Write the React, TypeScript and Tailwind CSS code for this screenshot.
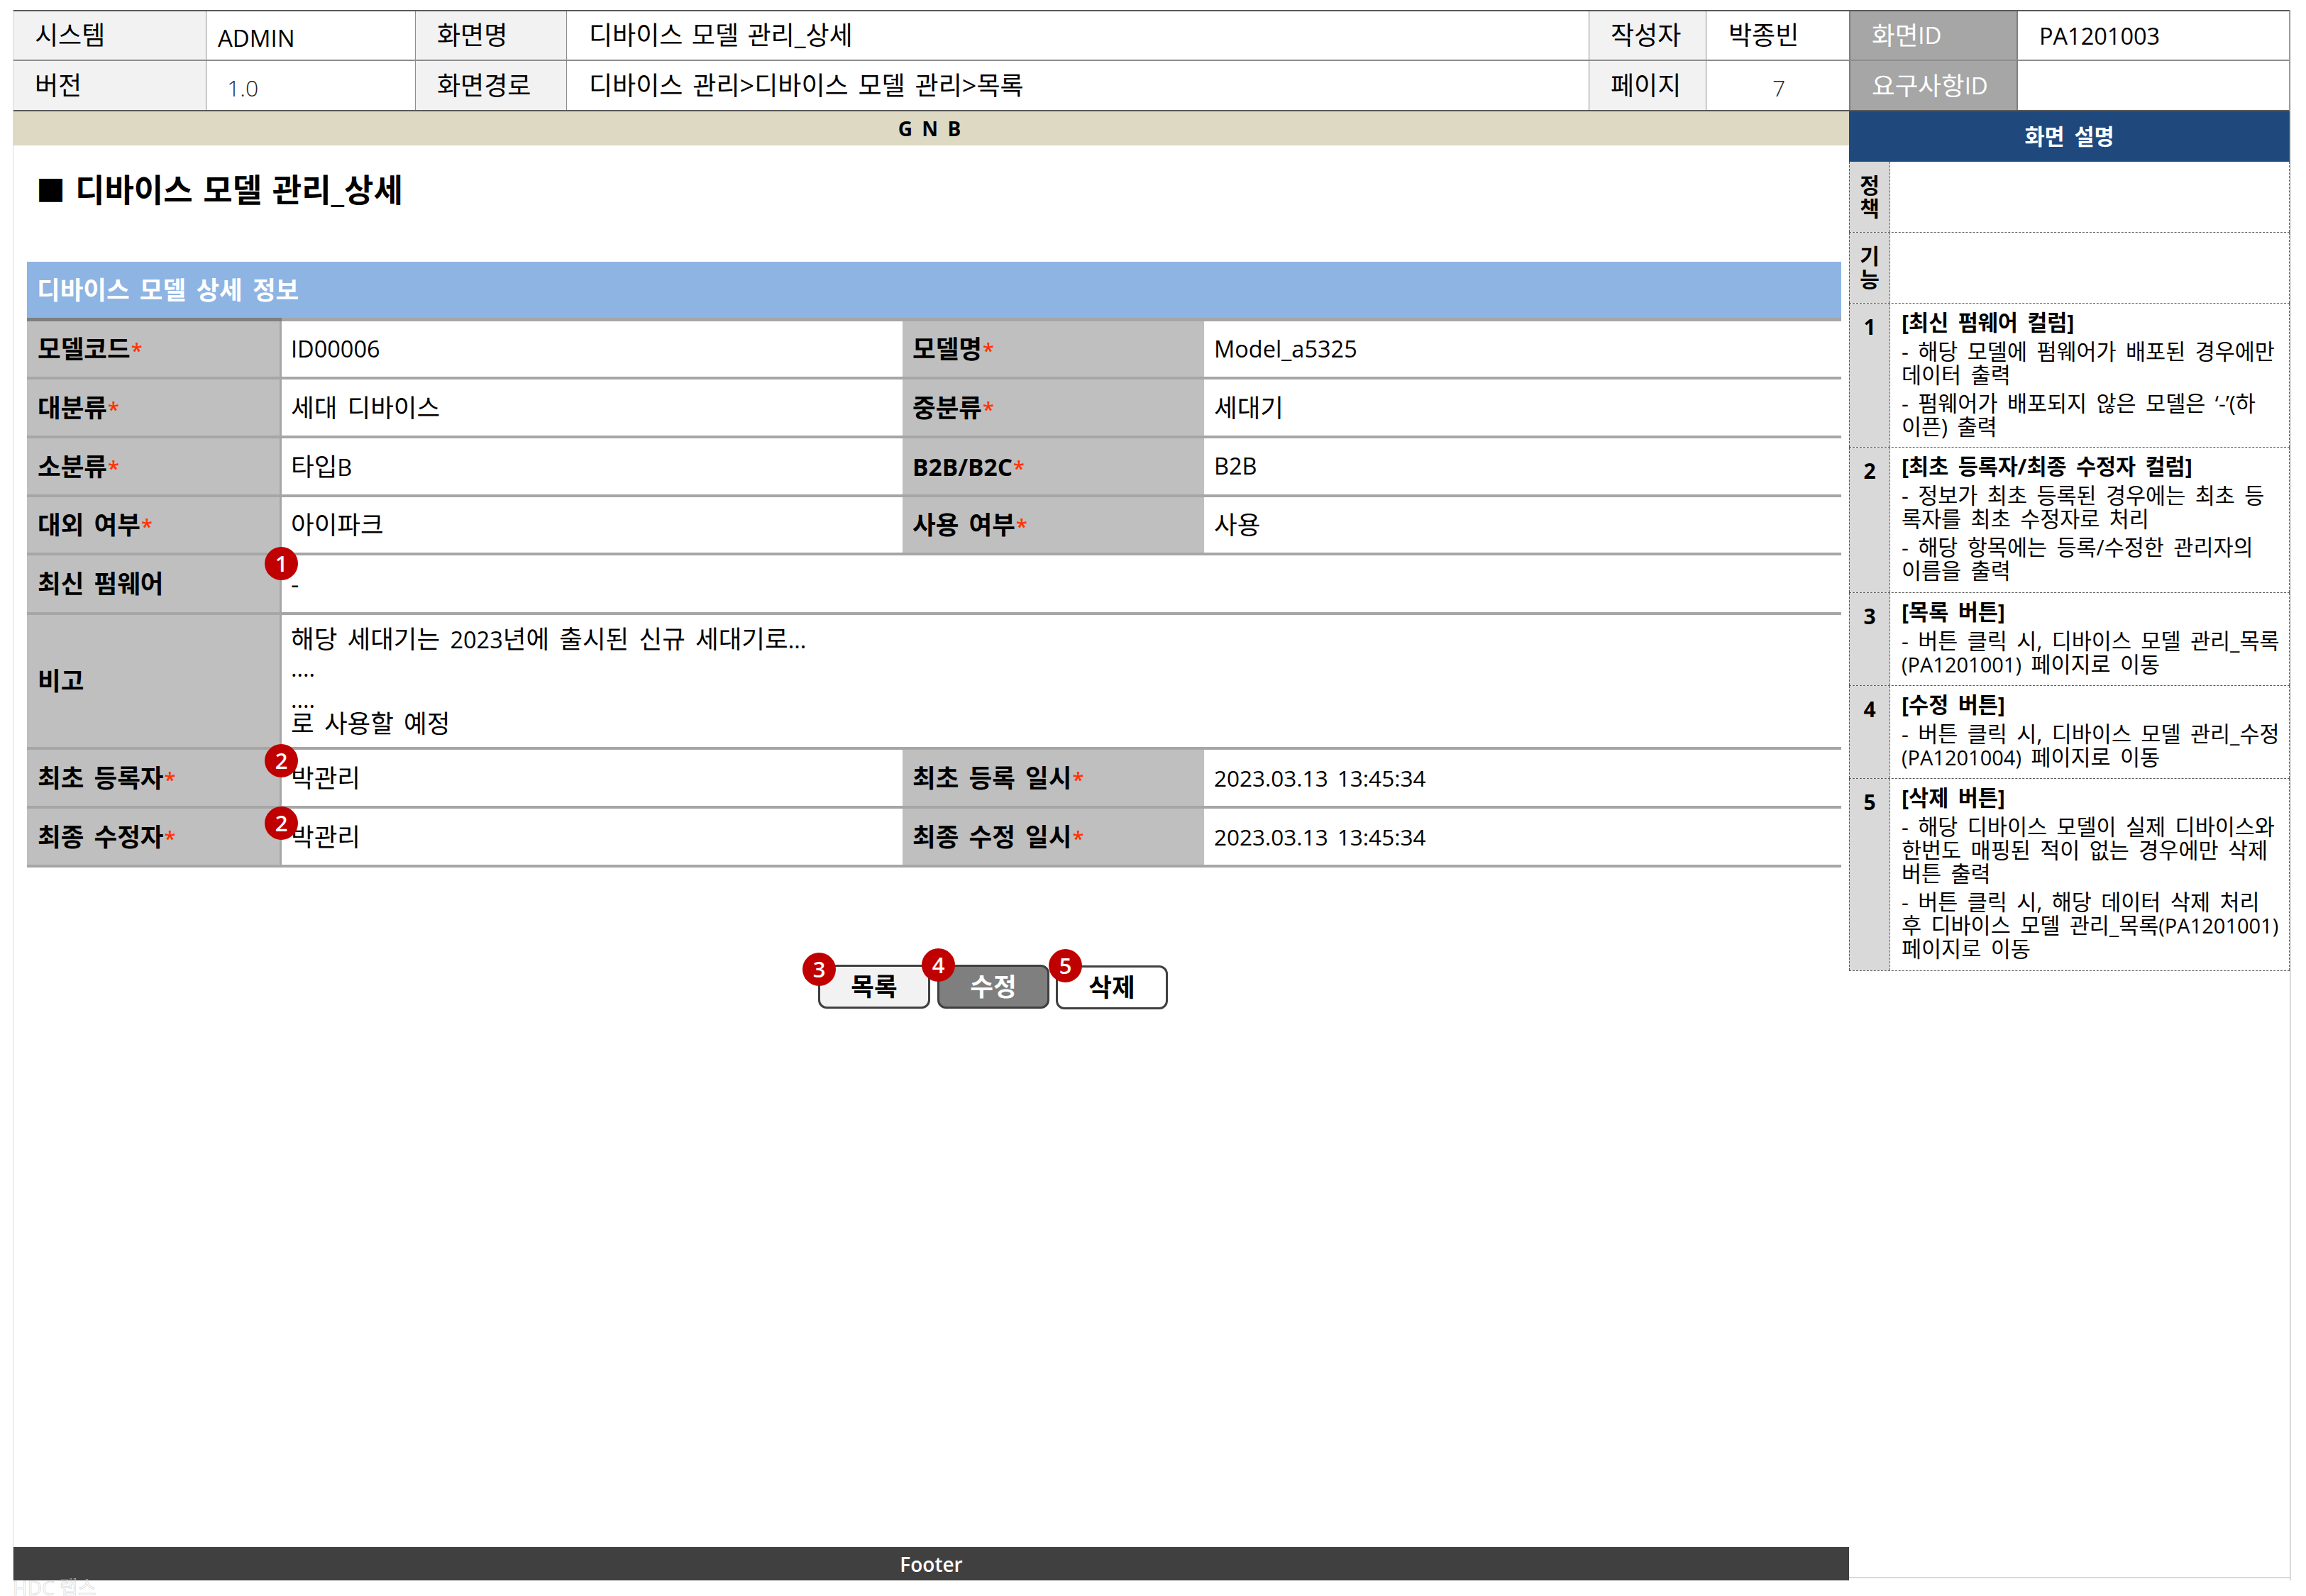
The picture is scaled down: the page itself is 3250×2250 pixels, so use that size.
const sans = "font-['Open_Sans','Noto_Sans_CJK_KR',sans-serif]";

function Badge({ n, className }: { n: number; className: string }) {
  return (
    <span className={`absolute z-10 flex h-[47px] w-[47px] items-center justify-center rounded-full bg-[#c00000] text-[31px] font-semibold text-white ${className}`}>
      {n}
    </span>
  );
}

function Th({ children, req, w, border }: { children: React.ReactNode; req?: boolean; w: string; border?: boolean }) {
  return (
    <div className={`flex shrink-0 items-center bg-[#bfbfbf] text-[35.5px] font-bold text-black [word-spacing:5px] ${w} ${border ? 'border-r-[3px] border-[#a6a6a6] pl-[15px]' : 'pl-[14px]'}`}>
      <span>
        {children}
        {req && <span className="ml-[1px] text-[29px] font-semibold text-[#ff3300]">*</span>}
      </span>
    </div>
  );
}

function Row({ h, a, av, b, bv, reqA = true, badge }: { h: string; a: React.ReactNode; av: React.ReactNode; b?: React.ReactNode; bv?: React.ReactNode; reqA?: boolean; badge?: React.ReactNode }) {
  return (
    <div className={`relative flex border-b-[4px] border-[#a6a6a6] ${h}`}>
      <Th w="w-[359px]" border req={reqA}>{a}</Th>
      <div className="flex w-[875px] shrink-0 items-center pl-[13px] text-[35.5px] [word-spacing:5px]">{av}</div>
      {b && <Th w="w-[425px]" req>{b}</Th>}
      {bv && <div className="flex flex-1 items-center pl-[14px] text-[35.5px] [word-spacing:5px]">{bv}</div>}
      {badge}
    </div>
  );
}

function Lat({ children }: { children: React.ReactNode }) {
  return <span className="text-[32.5px]">{children}</span>;
}

function Dt({ children }: { children: React.ReactNode }) {
  return <span className="text-[31.5px]">{children}</span>;
}

function Pa({ children }: { children: React.ReactNode }) {
  return <span className="text-[29px]">{children}</span>;
}

function Desc({ n, h, title, paras }: { n: number | string; h: string; title?: string; paras?: React.ReactNode[][] }) {
  return (
    <div className={`flex border-b border-dashed border-[#595959] ${h}`}>
      <div className="flex w-[58px] shrink-0 flex-col items-center border-x border-dashed border-[#595959] bg-[#d9d9d9] pt-[16px] text-[30px] font-bold leading-[33px]">
        {String(n).split('').map((c, i) => <span key={i}>{c}</span>)}
      </div>
      <div className="flex-1 whitespace-nowrap border-r border-dashed border-[#595959] pl-[16px] pt-[10px] text-[30.5px] leading-[33px] [word-spacing:5.5px]">
        {title && <div className="mb-[8px] font-bold">{title}</div>}
        {paras?.map((p, i) => (
          <div key={i} className={i > 0 ? 'mt-[7px]' : ''}>
            {p.map((l, j) => <div key={j}>{l}</div>)}
          </div>
        ))}
      </div>
    </div>
  );
}

function HCell({ w, label, children, last }: { w: string; label?: boolean; children?: React.ReactNode; last?: boolean }) {
  return (
    <div className={`flex items-center ${w} ${label ? 'bg-[#f2f2f2]' : ''} ${last ? '' : 'border-r border-[#8c8c8c]'}`}>
      {children}
    </div>
  );
}

export default function App() {
  return (
    <div className={`relative h-[2250px] w-[3250px] overflow-hidden bg-white pl-[18px] pt-[14px] text-black ${sans}`}>
      <div className="flex h-[2214px] w-[3211px]">
        {/* left column */}
        <div className="flex w-[2588px] shrink-0 flex-col border-l border-[#d9d9d9]">
          <div className="border-y-2 border-[#595959] text-[36px] [word-spacing:3px]">
            <div className="flex h-[70px] border-b-2 border-[#8c8c8c]">
              <HCell w="w-[272px]" label><span className="pl-[30px]">시스템</span></HCell>
              <HCell w="w-[295px]"><span className="pl-[16px] pt-[8px] text-[33px]">ADMIN</span></HCell>
              <HCell w="w-[213px]" label><span className="pl-[30px]">화면명</span></HCell>
              <HCell w="w-[1441px]"><span className="pl-[31px]">디바이스 모델 관리_상세</span></HCell>
              <HCell w="w-[165px]" label><span className="pl-[30px]">작성자</span></HCell>
              <HCell w="flex-1" last><span className="pl-[31px]">박종빈</span></HCell>
            </div>
            <div className="flex h-[69px]">
              <HCell w="w-[272px]" label><span className="pl-[30px]">버전</span></HCell>
              <HCell w="w-[295px]"><span className="pl-[29px] pt-[6px] text-[32px] font-light text-[#262626]">1.0</span></HCell>
              <HCell w="w-[213px]" label><span className="pl-[30px]">화면경로</span></HCell>
              <HCell w="w-[1441px]"><span className="pl-[31px] [word-spacing:4.5px]">디바이스 관리&gt;디바이스 모델 관리&gt;목록</span></HCell>
              <HCell w="w-[165px]" label><span className="pl-[30px]">페이지</span></HCell>
              <HCell w="flex-1" last><span className="pl-[93px] pt-[6px] text-[32px] font-light text-[#262626]">7</span></HCell>
            </div>
          </div>
          <div className="flex h-[48px] items-center justify-center bg-[#ddd9c3] pr-[5px] text-[28px] font-bold [word-spacing:6px]">G N B</div>

          <div className="flex items-center pl-[32px] pt-[38px] text-[45px] font-bold leading-[50px] [word-spacing:3px]">
            <span className="w-[55px] text-[41px]">■</span>
            <span>디바이스 모델 관리_상세</span>
          </div>

          <div className="ml-[19px] mt-[76px] w-[2557px]">
            <div className="flex h-[79px] items-center bg-[#8eb4e3] pl-[14px] text-[35.5px] font-bold text-white [word-spacing:5px]">디바이스 모델 상세 정보</div>
            <div className="flex h-[5px]"><div className="w-[359px] bg-[#7f7f7f]" /><div className="flex-1 bg-[#a6a6a6]" /></div>
            <Row h="h-[82px]" a="모델코드" av={<Lat>ID00006</Lat>} b="모델명" bv={<Lat>Model_a5325</Lat>} />
            <Row h="h-[83px]" a="대분류" av="세대 디바이스" b="중분류" bv="세대기" />
            <Row h="h-[83px]" a="소분류" av={<span>타입<Lat>B</Lat></span>} b={<span className="text-[33.5px]">B2B/B2C</span>} bv={<Lat>B2B</Lat>} />
            <Row h="h-[82px]" a="대외 여부" av="아이파크" b="사용 여부" bv="사용" />
            <Row h="h-[84px]" a="최신 펌웨어" reqA={false} av="-" badge={<Badge n={1} className="left-[335px] top-[-12px]" />} />
            <Row
              h="h-[190px]"
              a="비고"
              reqA={false}
              av={<div className="leading-[39.5px]"><div>해당 세대기는 <Lat>2023</Lat>년에 출시된 신규 세대기로<Lat>...</Lat></div><div><Lat>....</Lat></div><div className="mt-[3px]"><Lat>....</Lat></div><div className="mt-[-5px]">로 사용할 예정</div></div>}
            />
            <Row h="h-[83px]" a="최초 등록자" av="박관리" b="최초 등록 일시" bv={<Dt>2023.03.13 13:45:34</Dt>} badge={<Badge n={2} className="left-[335px] top-[-8px]" />} />
            <Row h="h-[83px]" a="최종 수정자" av="박관리" b="최종 수정 일시" bv={<Dt>2023.03.13 13:45:34</Dt>} badge={<Badge n={2} className="left-[335px] top-[-3px]" />} />
          </div>

          <div className="ml-[1134px] mt-[137px] flex items-start text-[35.5px] font-bold">
            <div className="relative mr-[10px] flex h-[62px] w-[158px] items-center justify-center rounded-[12px] border-[3px] border-[#404040] bg-[#f2f2f2]">
              목록<Badge n={3} className="left-[-25px] top-[-20px]" />
            </div>
            <div className="relative mr-[9px] flex h-[62px] w-[158px] items-center justify-center rounded-[12px] border-[3px] border-[#404040] bg-[#7f7f7f] text-white">
              수정<Badge n={4} className="left-[-25px] top-[-26px]" />
            </div>
            <div className="relative mt-[1px] flex h-[62px] w-[158px] items-center justify-center rounded-[12px] border-[3px] border-[#404040] bg-white">
              삭제<Badge n={5} className="left-[-13px] top-[-26px]" />
            </div>
          </div>

          <div className="mt-auto flex h-[47px] items-center justify-center bg-[#404040] text-[28px] font-semibold text-white">Footer</div>
        </div>

        {/* right column */}
        <div className="flex flex-1 flex-col border-r-2 border-[#d9d9d9]">
          <div className="mb-[3px] flex flex-1 flex-col border-b-2 border-[#d9d9d9]">
            <div className="w-[621px]">
              <div className="border-y-2 border-r border-[#595959] border-r-[#8c8c8c] text-[35.5px]">
                <div className="flex h-[70px] border-b-2 border-[#8c8c8c]">
                  <div className="flex w-[238px] items-center border-x-2 border-[#7f7f7f] bg-[#a6a6a6] pl-[30px] text-white">화면<span className="text-[33px]">ID</span></div>
                  <div className="flex flex-1 items-center pl-[30px] pt-[2px] text-[32.5px]">PA1201003</div>
                </div>
                <div className="flex h-[69px]">
                  <div className="flex w-[238px] items-center border-x-2 border-[#7f7f7f] bg-[#a6a6a6] pl-[30px] text-white">요구사항<span className="text-[33px]">ID</span></div>
                  <div className="flex-1" />
                </div>
              </div>
              <div className="flex h-[71px] items-center justify-center bg-[#1f497d] text-[30.5px] font-bold text-white [word-spacing:6px]">화면 설명</div>
              <Desc n="정책" h="h-[100px]" />
              <Desc n="기능" h="h-[100px]" />
              <Desc n={1} h="h-[203px]" title="[최신 펌웨어 컬럼]" paras={[['- 해당 모델에 펌웨어가 배포된 경우에만', '데이터 출력'], ["- 펌웨어가 배포되지 않은 모델은 ‘-’(하", '이픈) 출력']]} />
              <Desc n={2} h="h-[205px]" title="[최초 등록자/최종 수정자 컬럼]" paras={[['- 정보가 최초 등록된 경우에는 최초 등', '록자를 최초 수정자로 처리'], ['- 해당 항목에는 등록/수정한 관리자의', '이름을 출력']]} />
              <Desc n={3} h="h-[131px]" title="[목록 버튼]" paras={[['- 버튼 클릭 시, 디바이스 모델 관리_목록', <><Pa>(PA1201001)</Pa> 페이지로 이동</>]]} />
              <Desc n={4} h="h-[131px]" title="[수정 버튼]" paras={[['- 버튼 클릭 시, 디바이스 모델 관리_수정', <><Pa>(PA1201004)</Pa> 페이지로 이동</>]]} />
              <Desc n={5} h="h-[271px]" title="[삭제 버튼]" paras={[['- 해당 디바이스 모델이 실제 디바이스와', '한번도 매핑된 적이 없는 경우에만 삭제', '버튼 출력'], ['- 버튼 클릭 시, 해당 데이터 삭제 처리', <>후 디바이스 모델 관리_목록<Pa>(PA1201001)</Pa></>, '페이지로 이동']]} />
            </div>
          </div>
        </div>
      </div>
      <div className="absolute left-[18px] top-[2227px] text-[28px] leading-[22px] text-transparent [-webkit-text-stroke:0.6px_#cfcfcf]">HDC 랩스</div>
    </div>
  );
}
